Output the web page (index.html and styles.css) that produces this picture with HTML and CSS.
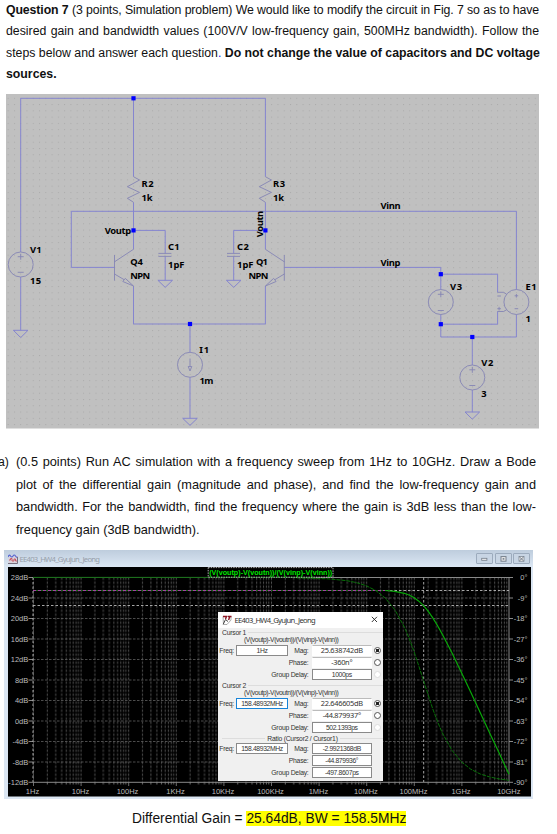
FILE: index.html
```html
<!DOCTYPE html>
<html lang="en">
<head>
<meta charset="utf-8">
<title>Question 7</title>
<link rel="stylesheet" href="styles.css">
</head>
<body>
<main class="page">
  <section class="question">
    <p class="line tight"><b>Question 7</b> (3 points, Simulation problem) We would like to modify the circuit in Fig. 7 so as to have</p>
    <p class="line">desired gain and bandwidth values (100V/V low-frequency gain, 500MHz bandwidth). Follow the</p>
    <p class="line">steps below and answer each question<span class="dot">.</span> <b>Do not change the value of capacitors and DC voltage</b></p>
    <p class="line last"><b>sources.</b></p>
  </section>

  <svg class="circuit" viewBox="6 94 533 334.5" width="533" height="334.5">
    <defs>
      <pattern id="dots" x="20.2" y="97.8" width="6.275" height="6.275" patternUnits="userSpaceOnUse"><rect width="1" height="1" fill="#aaa"/></pattern>
    </defs>
    <rect x="6" y="94" width="533" height="334.5" fill="#c0c0c0"/>
    <rect x="6" y="94" width="533" height="334.5" fill="url(#dots)"/>
    <g class="wire">
      <path d="M20.7 252V98.3H265.4V176.7M133.5 98.3V176.7M133.5 202.3V249.3M265.4 202.3V249.3"/>
      <path d="M114.5 267.4H71.3V211.3H516.4V289.5M284.3 267.4H440.8V289.5"/>
      <path d="M133.5 230.4H165.2V253.4M165.2 256.4V280.3M265.4 230.4H233.7V253.4M233.7 256.4V280.3"/>
      <path d="M133.5 286V324H265.4V286M190 324V352M190 377.4V418.3M20.7 277V330.3"/>
      <path d="M440.8 274.2H497.6V292.3M440.8 324.2H497.6V311.5M440.8 314.5V337H516.4V314.5M472.3 337V365M472.3 390V412"/>
      <path d="M13.4 330.3H28L20.7 337.6ZM157.9 280.3H172.5L165.2 287.4ZM226.4 280.3H241L233.7 287.4ZM182.7 418.3H197.3L190 425.4ZM465 412H479.6L472.3 419.2Z"/>
    </g>
    <g class="part">
      <path d="M133.5 176.7L139.5 180L127.4 186.7L139.5 192.4L127.4 198.3L133.5 202.3M265.4 176.7L271.4 180L259.3 186.7L271.4 192.4L259.3 198.3L265.4 202.3"/>
      <path d="M114.5 255V280.6M114.5 261.8L133.5 249.3M114.5 274L124 279.6M133.5 286L122.8 281.5L125.3 278.4ZM284.3 255V280.6M284.3 261.8L265.4 249.3M284.3 274L275 279.6M265.4 286L276.1 281.5L273.6 278.4Z"/>
      <path d="M158.4 253.4H171.4M158.4 256.4H171.4M227 253.4H240M227 256.4H240"/>
      <circle cx="20.7" cy="264.5" r="12.5"/><circle cx="190" cy="364.8" r="12.5"/><circle cx="440.8" cy="302" r="12.5"/><circle cx="516.4" cy="302" r="12.5"/><circle cx="472.3" cy="377.5" r="12.5"/>
      <path d="M17.7 256.7H23.7M20.7 253.7V259.7M17.7 272.3H23.7M437.8 294.3H443.8M440.8 291.3V297.3M437.8 310.5H443.8M469.3 369.8H475.3M472.3 366.8V372.8M469.3 385.5H475.3M514.6 295.8H518.2M516.4 294V297.6M514.6 308.7H518.2M497.3 296H500.9M497.3 308.7H500.9M499.1 306.9V310.5M497.6 292.3H503.5L506.5 294.2M497.6 311.5H503.5L506.5 309.8M190 358.5V366.5M188.2 366.5H191.8L190 371Z"/>
    </g>
    <g class="node">
      <rect x="131.4" y="96.2" width="4.2" height="4.2"/><rect x="131.4" y="228.3" width="4.2" height="4.2"/><rect x="263.3" y="228.3" width="4.2" height="4.2"/><rect x="187.9" y="321.9" width="4.2" height="4.2"/><rect x="438.7" y="272.1" width="4.2" height="4.2"/><rect x="438.7" y="322.1" width="4.2" height="4.2"/><rect x="470.2" y="334.9" width="4.2" height="4.2"/>
    </g>
    <g class="label">
      <text x="141.5" y="186.6" textLength="12">R2</text><text x="141.5" y="200.8" textLength="11">1k</text>
      <text x="273" y="186.6" textLength="12">R3</text><text x="273" y="200.8" textLength="11">1k</text>
      <text x="104.7" y="233.9" textLength="26.5">Voutp</text>
      <text transform="translate(262.8 237.3) rotate(-90)" textLength="26.5">Voutn</text>
      <text x="30" y="252.8" textLength="11.5">V1</text><text x="30" y="284" textLength="11.2">15</text>
      <text x="130.3" y="265.3" textLength="12.5">Q4</text><text x="130.3" y="279.2" textLength="19.8">NPN</text>
      <text x="168" y="249.7" textLength="11.5">C1</text><text x="168" y="268.2" textLength="16.5">1pF</text>
      <text x="237" y="249.7" textLength="11.8">C2</text><text x="237" y="268.2" textLength="16.5">1pF</text>
      <text x="256" y="265.3" textLength="11.8">Q1</text><text x="248.6" y="279.2" textLength="19.8">NPN</text>
      <text x="199.2" y="352.8" textLength="10">I1</text><text x="199.4" y="384.4" textLength="14">1m</text>
      <text x="380.5" y="209.1" textLength="20">Vinn</text><text x="380.5" y="265.7" textLength="20">Vinp</text>
      <text x="450" y="290" textLength="12">V3</text><text x="525.5" y="290" textLength="11">E1</text><text x="525.5" y="321.7">1</text>
      <text x="481.3" y="365.6" textLength="12">V2</text><text x="481.3" y="397">3</text>
    </g>
  </svg>

  <section class="task">
    <span class="marker">a)</span>
    <div class="task-text">
      <p class="line">(0.5 points) Run AC simulation with a frequency sweep from 1Hz to 10GHz. Draw a Bode</p>
      <p class="line">plot of the differential gain (magnitude and phase), and find the low-frequency gain and</p>
      <p class="line">bandwidth. For the bandwidth, find the frequency where the gain is 3dB less than the low-</p>
      <p class="line last">frequency gain (3dB bandwidth).</p>
    </div>
  </section>

  <section class="window">
    <header class="titlebar">
      <svg width="10" height="10" viewBox="0 0 10 10"><rect x=".5" y="1" width="9" height="8.5" fill="#d9d2dc"/><path d="M0 3Q1.2 0 2.5 2T5 2T7.5 2T10 3" fill="none" stroke="#5367d2" stroke-width="1.2"/><path d="M1 6H2.5V4.5H4V7H6V5H7.5V7H9" fill="none" stroke="#c65a67"/><path d="M0 9.5H9.5V3" fill="none" stroke="#776f80"/></svg>
      <span class="title">EE403_HW4_Gyujun_Jeong</span>
      <span class="winbtn"><svg width="7" height="6"><rect x=".7" y="2.3" width="5.2" height="2" fill="#eee" stroke="#747e8b" stroke-width=".8"/></svg></span>
      <span class="winbtn"><svg width="7" height="6"><rect x="1" y=".6" width="5" height="4.6" fill="#eee" stroke="#747e8b"/><rect x="2.6" y="2.1" width="1.8" height="1.6" fill="#747e8b"/></svg></span>
      <span class="winbtn"><svg width="7" height="6"><rect x="1" y=".6" width="5" height="4.6" fill="#eee" stroke="#747e8b" stroke-width=".7"/><path d="M1.3 .8L5.7 5M5.7 .8L1.3 5" stroke="#747e8b"/></svg></span>
    </header>
    <svg class="plot" viewBox="7.5 567 523.5 229.5" width="523.5" height="229.5">
      <defs>
        <pattern id="decade" x="32.5" y="577.5" width="47.6" height="4" patternUnits="userSpaceOnUse">
          <path d="M.5 0V2.5M14.3 0V2.5M22.7 0V2.5M28.7 0V2.5M33.3 0V2.5M37 0V2.5M40.2 0V2.5M43 0V2.5M45.4 0V2.5" stroke="#606060" stroke-width=".8"/>
        </pattern>
        <pattern id="ticks" x="32.5" y="782" width="47.6" height="5" patternUnits="userSpaceOnUse">
          <path d="M.5 0V4M14.3 0V2.5M22.7 0V2.5M28.7 0V2.5M33.3 0V2.5M37 0V2.5M40.2 0V2.5M43 0V2.5M45.4 0V2.5" stroke="#888" stroke-width=".8"/>
        </pattern>
      </defs>
      <rect x="7.5" y="567" width="523.5" height="229.5" fill="#000"/>
      <rect x="32.5" y="578" width="476" height="204" fill="url(#decade)"/>
      <path class="hgrid" d="M32.5 598H508.5M32.5 618.5H508.5M32.5 639H508.5M32.5 659.5H508.5M32.5 680H508.5M32.5 700.5H508.5M32.5 721H508.5M32.5 741.5H508.5M32.5 762H508.5"/>
      <path class="axis" d="M28 782.3H512.5M508.5 577.5V782.3M28 577.5H32.5M290 577.5H512.5M28 598H32.5M28 618.5H32.5M28 639H32.5M28 659.5H32.5M28 680H32.5M28 700.5H32.5M28 721H32.5M28 741.5H32.5M28 762H32.5M508.5 598H512.5M508.5 618.5H512.5M508.5 639H512.5M508.5 659.5H512.5M508.5 680H512.5M508.5 700.5H512.5M508.5 721H512.5M508.5 741.5H512.5M508.5 762H512.5"/>
      <rect x="32.5" y="782" width="476.5" height="5" fill="url(#ticks)"/>
      <path class="cursor" d="M32.5 577.5V782M423.2 577.5V782M32.5 605.5H508.5M385 590.5H508.5"/>
      <path d="M32.5 577.4H315" stroke="#207a20" fill="none"/>
      <path d="M32.5 590.5H385" stroke="#176b17" fill="none"/><path d="M32.5 590.5H385" stroke="#a343a3" stroke-dasharray="3 2" fill="none"/>
      <path class="mag" d="M384.7 590.5L394.2 591.4L403.8 593.3L408.5 595L413.3 597.4L418 600.9L422.8 605.4L427.6 611.1L432.3 617.9L437.1 625.7L441.8 634.2L451.4 652.8L460.9 672.5L470.4 692.6L479.9 713L489.4 733.4L499 753.8L508.5 774.3"/>
      <path class="phase" d="M296 577.9L327.6 578.8L346.6 580.7L356.2 582.7L365.7 585.7L375.2 590.5L384.7 598L394.2 609.6L403.8 626.9L408.5 638L413.3 650.8L418 665.1L422.8 679.9L427.6 694.7L432.3 709L437.1 721.8L441.8 732.9L451.4 750.2L460.9 761.8L470.4 769.3L479.9 774.1L489.4 777L499 779L508.5 780.3"/>
      <rect x="207.7" y="567.6" width="124.8" height="9.6" fill="#000" stroke="#ddd" stroke-width=".8" stroke-dasharray="1.5 1"/>
      <text class="trace" x="208.7" y="575" textLength="123" lengthAdjust="spacingAndGlyphs">(V(voutp)-V(voutn))/(V(vinp)-V(vinn))</text>
      <g class="tick end">
        <text x="27.8" y="580.2">28dB</text><text x="27.8" y="600.7">24dB</text><text x="27.8" y="621.2">20dB</text><text x="27.8" y="641.7">16dB</text><text x="27.8" y="662.2">12dB</text><text x="27.8" y="682.7">8dB</text><text x="27.8" y="703.2">4dB</text><text x="27.8" y="723.7">0dB</text><text x="27.8" y="744.2">-4dB</text><text x="27.8" y="764.7">-8dB</text><text x="27.8" y="785.2">-12dB</text>
        <text x="527" y="580.2">0°</text><text x="527" y="600.7">-9°</text><text x="527" y="621.2">-18°</text><text x="527" y="641.7">-27°</text><text x="527" y="662.2">-36°</text><text x="527" y="682.7">-45°</text><text x="527" y="703.2">-54°</text><text x="527" y="723.7">-63°</text><text x="527" y="744.2">-72°</text><text x="527" y="764.7">-81°</text><text x="527" y="785.2">-90°</text>
      </g>
      <g class="tick mid">
        <text x="32" y="794">1Hz</text><text x="80" y="794">10Hz</text><text x="127" y="794">100Hz</text><text x="175" y="794">1KHz</text><text x="222.5" y="794">10KHz</text><text x="270" y="794">100KHz</text><text x="318" y="794">1MHz</text><text x="365.5" y="794">10MHz</text><text x="413" y="794">100MHz</text><text x="460.5" y="794">1GHz</text><text x="508.3" y="794">10GHz</text>
      </g>
    </svg>

    <aside class="dialog">
      <header class="dialog-head">
        <svg width="10" height="10" viewBox="0 0 10 10"><path d="M1 1.5H9V5L5 9.5H1.5Z" fill="#fff" stroke="#777" stroke-width=".6"/><path d="M1 1.5H4.5L3.5 4M6 1.5H9.5M7.8 1.5L6.6 5" fill="none" stroke="#8e1522" stroke-width="1.4"/><path d="M1.2 9.3L3.5 4.5L6 6.5" fill="none" stroke="#444" stroke-width="1"/></svg>
        <span>EE403_HW4_Gyujun_Jeong</span>
        <svg width="7" height="7"><path d="M.8 .8L6 6M6 .8L.8 6" stroke="#222" stroke-width=".9"/></svg>
      </header>
      <section class="group">
        <div class="legend"><span>Cursor 1</span></div>
        <div class="expr">(V(voutp)-V(voutn))/(V(vinp)-V(vinn))</div>
        <div class="fields">
          <label>Freq:</label><output>1Hz</output><label>Mag:</label><output class="big">25.638742dB</output><i class="radio on"></i>
          <label class="wide">Phase:</label><output class="big">-360n°</output><i class="radio"></i>
          <label class="wide">Group Delay:</label><output>1000ps</output><i class="radio off"></i>
        </div>
      </section>
      <section class="group second">
        <div class="legend"><span>Cursor 2</span></div>
        <div class="expr">(V(voutp)-V(voutn))/(V(vinp)-V(vinn))</div>
        <div class="fields">
          <label>Freq:</label><output class="focus">158.48932MHz</output><label>Mag:</label><output class="big">22.646605dB</output><i class="radio on"></i>
          <label class="wide">Phase:</label><output class="big">-44.879937°</output><i class="radio"></i>
          <label class="wide">Group Delay:</label><output>502.1393ps</output><i class="radio off"></i>
        </div>
      </section>
      <section class="group third">
        <div class="legend center"><span>Ratio (Cursor2 / Cursor1)</span></div>
        <div class="fields">
          <label>Freq:</label><output>158.48932MHz</output><label>Mag:</label><output>-2.9921368dB</output><i></i>
          <label class="wide">Phase:</label><output>-44.879936°</output><i></i>
          <label class="wide">Group Delay:</label><output>-497.8607ps</output><i></i>
        </div>
      </section>
    </aside>
  </section>

  <p class="answer">Differential Gain = <mark>25.64dB, BW = 158.5MHz</mark></p>
</main>
</body>
</html>
```
FILE: styles.css
```css
* { box-sizing: border-box; }
body { margin: 0; background: #fff; color: #111; font-family: "Liberation Sans", Arial, sans-serif; overflow: hidden; }
p { margin: 0; }
svg { display: block; flex: none; }
.page { width: 557px; height: 834px; overflow: hidden; }
.question { height: 94px; padding: 0 18px 0 6px; width: 557px; }
.line { font-size: 12.3px; line-height: 21.3px; height: 21.3px; white-space: nowrap; text-align: justify; text-align-last: justify; }
.line.last { text-align-last: left; }
.line.tight { letter-spacing: -.105px; }
.dot { color: #2020e0; }
.circuit { margin-left: 6px; }
.wire { fill: none; stroke: #8585cf; stroke-width: 1; }
.part { fill: none; stroke: #8585b4; stroke-width: .9; }
.node { fill: #0000ff; }
.label { font: bold 9.4px "Noto Sans", sans-serif; fill: #000; }
.task { display: flex; margin-top: 22.5px; height: 99px; }
.task .line { font-size: 12.75px; line-height: 22.5px; height: 22.5px; }
.marker { width: 18px; margin-left: -2px; font-size: 12.3px; line-height: 22.5px; flex: none; white-space: nowrap; }
.task-text { width: 520px; }
.window { position: relative; width: 529px; height: 248.5px; margin-left: 4px; padding: 0 2px 2px 3.5px; background: #dbe6f3; }
.titlebar { display: flex; align-items: center; height: 17px; margin: 0 -2px 0 -3.5px; padding: 0 3px 0 4px; gap: 1.5px; background: linear-gradient(#becddd, #dce7f4); }
.title { flex: 1; color: #979faa; font: 7.7px "Noto Sans", sans-serif; letter-spacing: -.75px; padding-top: 1px; }
.winbtn { width: 17px; height: 10.5px; display: flex; align-items: center; justify-content: center; border: 1px solid #9cabbd; border-radius: 1px; background: #c8d5e4; }
.hgrid { stroke: #606060; stroke-width: .8; stroke-dasharray: 2.5 1.5; fill: none; }
.axis { stroke: #999; stroke-width: .9; fill: none; }
.cursor { stroke: #b8b8b8; stroke-width: .9; stroke-dasharray: 2.5 2; fill: none; }
.mag { stroke: #08a808; stroke-width: 1.2; fill: none; }
.phase { stroke: #087008; stroke-width: 1; stroke-dasharray: 4 1; fill: none; }
.trace { fill: #00e500; font: bold 8px "Liberation Sans", sans-serif; }
.tick { fill: #bcbcbc; font: 7.5px "Liberation Sans", sans-serif; }
.end { text-anchor: end; }
.mid { text-anchor: middle; }
.dialog { position: absolute; left: 214px; top: 61.5px; width: 165px; height: 169px; background: #f0f0f0; color: #333; font: 6.8px "Liberation Sans", sans-serif; letter-spacing: -.24px; white-space: nowrap; }
.dialog-head { display: flex; align-items: center; height: 16px; padding: 0 5px 0 4px; gap: 2.5px; background: #fff; font: 7.6px "Noto Sans", sans-serif; letter-spacing: -.66px; }
.dialog-head span { flex: 1; }
.group { height: 53.2px; padding-top: 1px; }
.legend { display: flex; align-items: center; height: 8px; line-height: 8px; padding-left: 4px; }
.legend::after { content: ""; flex: 1; height: 1px; margin-left: 2px; background: #ddd; }
.legend.center::before { content: ""; flex: 1; height: 1px; margin-right: 2px; background: #ddd; }
.expr { height: 7px; line-height: 5px; padding-left: 26px; letter-spacing: -.42px; }
.fields { display: grid; grid-template-columns: 18px 52px 23.5px 60.5px 9px; grid-auto-rows: 11px; row-gap: 1px; padding-top: 1px; align-items: center; }
.fields label { text-align: right; padding-right: 2px; }
.fields label:nth-of-type(2) { padding-right: 3px; }
.fields .wide { grid-column: 1 / 4; padding-right: 3px; }
.fields output { height: 11px; line-height: 9.5px; border: 1px solid #8a8a8a; background: #fff; text-align: center; letter-spacing: -.38px; }
.fields .big { font: 7.4px/9px "Noto Sans", sans-serif; letter-spacing: -.3px; border-color: #fff; border-top-color: #bbb; }
.fields .focus { border-color: #1683d8; }
.radio { width: 7px; height: 7px; border: .8px solid #555; border-radius: 50%; background: #fff; margin-left: 2px; }
.radio.on { background: radial-gradient(circle, #222 0 1.6px, #fff 2px); }
.radio.off { border-color: #ddd; }
.third .fields { padding-top: 0; }
.answer { height: 19px; line-height: 17px; margin-top: 11px; padding-left: 132px; font-size: 13.8px; white-space: nowrap; }
mark { background: #ff0; color: inherit; }
```
